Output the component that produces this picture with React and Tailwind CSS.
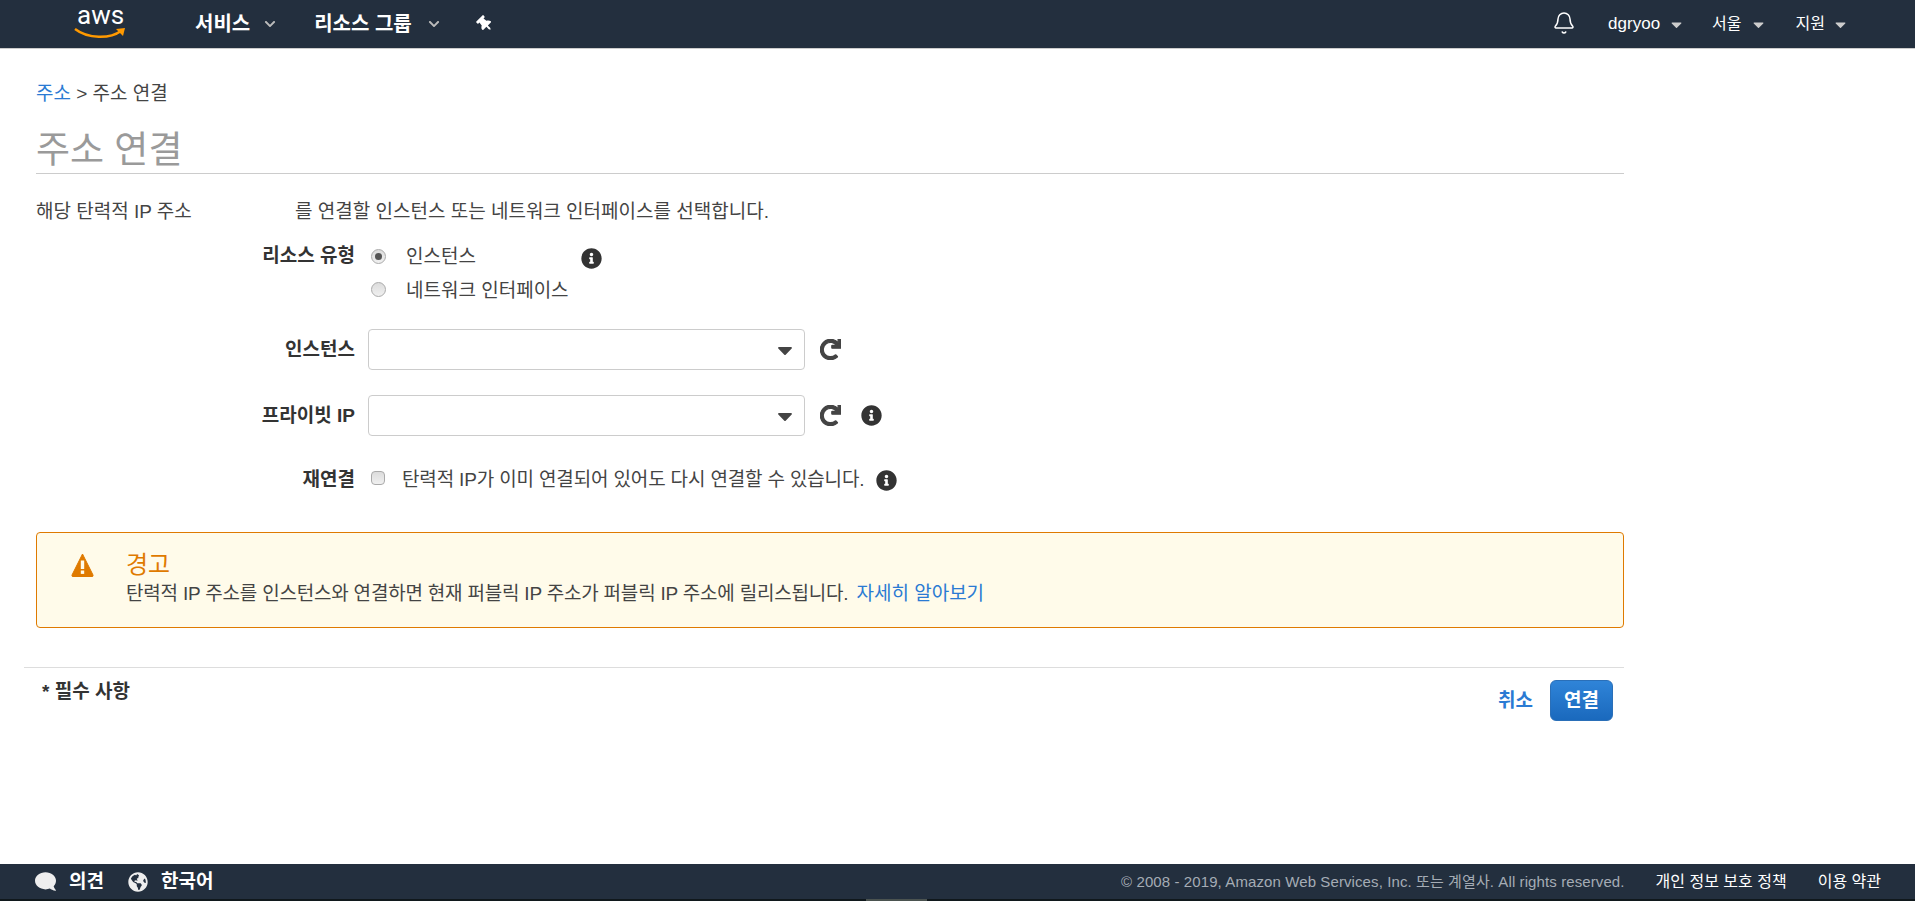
import { Bell } from 'lucide-react';
import { FaCaretDown, FaChevronDown, FaInfoCircle, FaRedo, FaThumbtack, FaComment, FaGlobeAmericas } from 'react-icons/fa';

function AwsLogo() {
  return (
    <div className="mb-[2px] flex w-[52px] flex-col items-start">
      <span className="ml-[3px] font-['Roboto',sans-serif] text-[26px] leading-[14px] text-white">aws</span>
      <svg viewBox="0 0 52 10" className="mt-[6px] h-[10px] w-[52px]">
        <path d="M1 1 C14 11 36 11 47 3" fill="none" stroke="#f90" strokeWidth="2.4" />
        <path d="M42 1 L51 0 L49 8 Z" fill="#f90" />
      </svg>
    </div>
  );
}

function WarningIcon() {
  return (
    <svg viewBox="0 0 23 24" className="h-[24px] w-[23px] shrink-0">
      <path d="M11.5 1 L22 22 Q22.5 23.5 21 23.5 L2 23.5 Q.5 23.5 1 22 Z" fill="#df7a00" stroke="#df7a00" strokeLinejoin="round" />
      <rect x="9.8" y="7.5" width="3.4" height="8.5" fill="#fffbea" />
      <rect x="9.8" y="17.5" width="3.4" height="3.4" fill="#fffbea" />
    </svg>
  );
}

function FormRow({ label, className, children }) {
  return (
    <div className={`flex ${className}`}>
      <div className="w-[319px] text-right font-bold text-[#333]">{label}</div>
      <div className="ml-[13px] flex-1">{children}</div>
    </div>
  );
}

function SelectBox() {
  return (
    <div className="flex h-[41px] w-[437px] items-center justify-end rounded border border-[#ccc] bg-white pr-[7px]">
      <FaCaretDown className="text-[24px] text-[#444]" />
    </div>
  );
}

function RefreshIcon() {
  return <FaRedo className="ml-[15px] text-[21px] text-[#444]" stroke="currentColor" strokeWidth={30} />;
}

function Radio({ checked }) {
  return (
    <span className="ml-[3px] flex h-[15px] w-[15px] items-center justify-center rounded-full border border-[#aaa] bg-gradient-to-b from-[#dcdcdc] to-[#f0f0f0]">
      {checked && <span className="h-[7px] w-[7px] rounded-full bg-[#555]" />}
    </span>
  );
}

export default function App() {
  return (
    <div className="flex h-[901px] flex-col bg-white font-['Liberation_Sans','Noto_Sans_CJK_KR',sans-serif] text-[19px] leading-[22px] text-[#444]">
      <header className="flex h-[49px] shrink-0 items-center border-b border-[#ccc] bg-[#232f3e] text-white">
        <div className="ml-[74px] w-[121px]"><AwsLogo /></div>
        <span className="text-[20px] font-bold">서비스</span>
        <FaChevronDown className="ml-[14px] text-[12px] text-[#bbb]" />
        <span className="ml-[38px] text-[20px] font-bold">리소스 그룹</span>
        <FaChevronDown className="ml-[16px] text-[12px] text-[#bbb]" />
        <FaThumbtack className="ml-[37px] rotate-[-45deg] text-[16px]" />
        <div className="ml-auto flex items-center pr-[66px] text-base">
          <Bell className="mb-[2px] h-[24px] w-[24px]" strokeWidth={1.5} />
          <span className="ml-[32px] text-[17px]">dgryoo</span>
          <FaCaretDown className="ml-2 text-[17px] text-[#ccc]" />
          <span className="ml-[27px]">서울</span>
          <FaCaretDown className="ml-2 text-[17px] text-[#ccc]" />
          <span className="ml-[29px]">지원</span>
          <FaCaretDown className="ml-[7px] text-[17px] text-[#ccc]" />
        </div>
      </header>

      <main className="flex-1">
        <div className="ml-[36px] w-[1588px]">
          <div className="mt-[34px] h-[22px]">
            <span className="text-[#2a7ad3]">주소</span> &gt; 주소 연결
          </div>
          <h1 className="mt-[25px] h-[42px] text-[37px] leading-[42px] font-normal text-[#9a9a9a]">주소 연결</h1>
          <div className="mt-[1px] border-t border-[#ccc]" />
          <div className="mt-[27px] flex h-[22px]">
            <span className="w-[259px]">해당 탄력적 IP 주소</span>
            <span>를 연결할 인스턴스 또는 네트워크 인터페이스를 선택합니다.</span>
          </div>
          <FormRow label="리소스 유형" className="mt-[22px]">
            <div className="flex">
              <div>
                <div className="flex h-[22px] items-center">
                  <Radio checked />
                  <span className="ml-5 pt-[2px]">인스턴스</span>
                </div>
                <div className="mt-[11px] flex h-[22px] items-center">
                  <Radio />
                  <span className="ml-5 pt-[3px]">네트워크 인터페이스</span>
                </div>
              </div>
              <FaInfoCircle className="ml-[12px] mt-[3px] text-[21px] text-[#333]" />
            </div>
          </FormRow>
          <FormRow label="인스턴스" className="mt-[29px] items-center">
            <div className="flex items-center">
              <SelectBox />
              <RefreshIcon />
            </div>
          </FormRow>
          <FormRow label="프라이빗 IP" className="mt-[25px] items-center">
            <div className="flex items-center">
              <SelectBox />
              <RefreshIcon />
              <FaInfoCircle className="ml-[20px] text-[21px] text-[#333]" />
            </div>
          </FormRow>
          <FormRow label={<span className="relative top-[2px]">재연결</span>} className="mt-[29px] items-center">
            <div className="flex items-center">
              <span className="ml-[3px] h-[14px] w-[14px] rounded-sm border border-[#aaa] bg-gradient-to-b from-[#dcdcdc] to-[#f0f0f0]" />
              <span className="ml-[17px] pt-[3px] tracking-[-0.15px]">탄력적 IP가 이미 연결되어 있어도 다시 연결할 수 있습니다.</span>
              <FaInfoCircle className="ml-3 mt-[5px] text-[21px] text-[#333]" />
            </div>
          </FormRow>
          <div className="mt-[41px] flex h-[96px] rounded border border-[#df7a00] bg-[#fffbea] pt-5">
            <div className="ml-[34px]"><WarningIcon /></div>
            <div className="ml-[32px]">
              <div className="text-2xl leading-6 text-[#df7a00]">경고</div>
              <div className="mt-[6px]">
                <span className="tracking-[-0.2px]">탄력적 IP 주소를 인스턴스와 연결하면 현재 퍼블릭 IP 주소가 퍼블릭 IP 주소에 릴리스됩니다.</span>
                <span className="ml-2 text-[#2a7ad3]">자세히 알아보기</span>
              </div>
            </div>
          </div>
        </div>
        <div className="ml-[24px] mt-[39px] flex w-[1600px] items-start justify-between border-t border-[#ddd]">
          <div className="ml-[18px] mt-[13px] font-bold text-[#333]">* 필수 사항</div>
          <div className="mr-[11px] mt-[12px] flex items-center">
            <span className="font-bold text-[#2a7ad3]">취소</span>
            <button className="ml-[17px] h-[41px] w-[63px] rounded-md border border-[#2a6fb8] bg-gradient-to-b from-[#2f84d8] to-[#1a69bd] font-bold text-white">연결</button>
          </div>
        </div>
      </main>

      <footer className="relative flex h-[37px] shrink-0 items-center border-b-2 border-[#10181c] bg-[#232f3e] text-white">
        <FaComment className="ml-[35px] -scale-x-100 text-[21px] text-[#eee]" />
        <span className="ml-[13px] font-bold">의견</span>
        <FaGlobeAmericas className="ml-[24px] text-[20px] text-[#eee]" />
        <span className="ml-[13px] font-bold">한국어</span>
        <span className="ml-auto text-[15px] tracking-[0.1px] text-[#a5acb5]">© 2008 - 2019, Amazon Web Services, Inc. 또는 계열사. All rights reserved.</span>
        <span className="ml-[31px] text-base">개인 정보 보호 정책</span>
        <span className="ml-[31px] mr-[34px] text-base">이용 약관</span>
        <div className="absolute -bottom-[2px] left-[866px] h-[2px] w-[61px] bg-[#4b5350]" />
      </footer>
    </div>
  );
}
